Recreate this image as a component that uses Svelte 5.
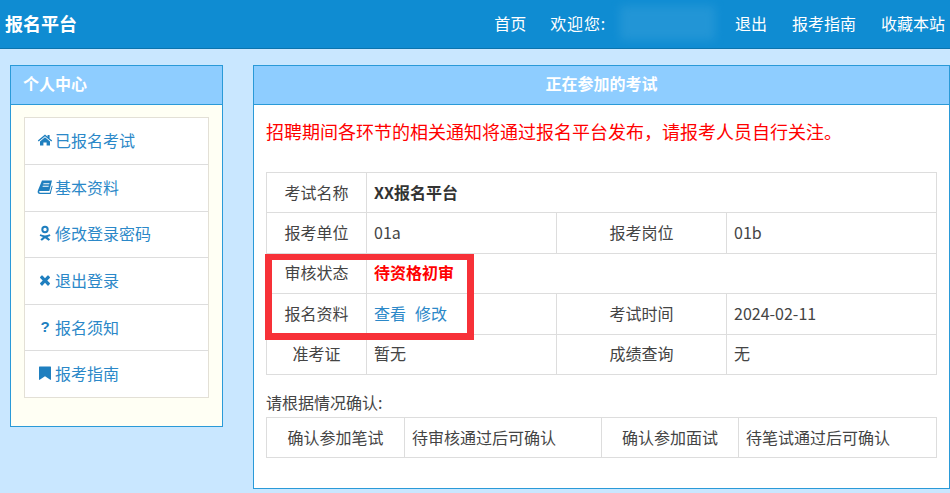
<script>
	const navLinks = ['退出', '报考指南', '收藏本站'];
	const menu = [
		{ name: 'home', label: '已报名考试' },
		{ name: 'book', label: '基本资料' },
		{ name: 'ok', label: '修改登录密码' },
		{ name: 'times', label: '退出登录' },
		{ name: 'question', label: '报名须知' },
		{ name: 'bookmark', label: '报考指南' }
	];
</script>

<header class="topbar">
	<div class="brand">报名平台</div>
	<nav class="nav">
		<a class="first" href="#home">首页</a>
		<span class="welcome">欢迎您:</span>
		<span class="smudge"></span>
		{#each navLinks as link}
			<a href="#link">{link}</a>
		{/each}
	</nav>
</header>

<div class="page">
	<aside class="side">
		<h2 class="side-title">个人中心</h2>
		<div class="side-body">
			<ul class="menu">
				{#each menu as item}
					<li>
						<a href="#menu">
							<span class="icon">
								{#if item.name === 'home'}
									<svg viewBox="0 0 16 16" width="16" height="16"><path d="M8 2.4 .8 8.6l.9 1L8 4.2l6.3 5.4.9-1-2.6-2.2V3h-2v1.7zM3 9.6 8 5.3l5 4.3v4H9.6v-3H6.4v3H3z" /></svg>
								{:else if item.name === 'book'}
									<svg viewBox="0 0 16 16" width="16" height="16"><path d="M5 1.5h10L12.300 12H3.200c-.8 0-1 .5-1 .8 0 .5.4.9 1 .9h9.600l2-7.200.8.600L13.600 15H3c-1.600 0-2.700-1.200-2.300-3zm1.500 2.800-.3 1h6l.3-1zm-.700 2.400-.3 1h6l.3-1z" /></svg>
								{:else if item.name === 'ok'}
									<svg viewBox="0 0 16 16" width="16" height="16"><path fill-rule="evenodd" d="M8 .8a3.700 3.700 0 1 1 0 7.400A3.700 3.700 0 0 1 8 .8m0 2a1.700 1.700 0 1 0 0 3.400 1.700 1.700 0 0 0 0-3.400" /><path d="M3.300 9.300c2.800 1.500 6.600 1.500 9.400 0l.8 1.500c-1 .7-2 1-3 1.200l2.600 2.500-1.500 1.300L8 13.200l-3.100 2.600-1.500-1.300L6 12c-1-.2-2.100-.5-3.300-1.200z" /></svg>
								{:else if item.name === 'times'}
									<svg viewBox="0 0 16 16" width="16" height="16"><path d="M4.500 3.600 3.200 4.900c-.3.300-.3.700 0 1L5.700 8.500l-2.500 2.600c-.3.300-.3.700 0 1l1.300 1.300c.3.300.7.300 1 0L8 10.800l2.500 2.600c.3.300.7.300 1 0l1.300-1.300c.3-.3.300-.7 0-1l-2.500-2.600 2.500-2.600c.3-.3.300-.7 0-1l-1.300-1.300c-.3-.3-.7-.3-1 0L8 6.200 5.500 3.600c-.3-.3-.7-.3-1 0" /></svg>
								{:else if item.name === 'question'}
									<span class="qmark">?</span>
								{:else}
									<svg viewBox="0 0 16 16" width="16" height="16"><path d="M2.500 1.500h11c.3 0 .5.2.5.500v12.500c0 .4-.4.6-.7.300L8 11.200l-5.300 3.600c-.3.200-.7 0-.7-.3V2c0-.3.200-.5.500-.5" /></svg>
								{/if}
							</span>{item.label}
						</a>
					</li>
				{/each}
			</ul>
		</div>
	</aside>

	<main class="main">
		<h2 class="main-title">正在参加的考试</h2>
		<div class="main-body">
			<p class="notice">招聘期间各环节的相关通知将通过报名平台发布，请报考人员自行关注。</p>

			<div class="table-wrap">
				<table class="info">
					<colgroup>
						<col class="c1" /><col class="c2" /><col class="c3" /><col />
					</colgroup>
					<tbody>
						<tr>
							<th>考试名称</th>
							<td colspan="3"><strong class="exam">XX报名平台</strong></td>
						</tr>
						<tr>
							<th>报考单位</th>
							<td>01a</td>
							<th>报考岗位</th>
							<td>01b</td>
						</tr>
						<tr>
							<th>审核状态</th>
							<td colspan="3"><strong class="status">待资格初审</strong></td>
						</tr>
						<tr>
							<th>报名资料</th>
							<td><a href="#view">查看</a><a class="edit" href="#edit">修改</a></td>
							<th>考试时间</th>
							<td>2024-02-11</td>
						</tr>
						<tr>
							<th>准考证</th>
							<td>暂无</td>
							<th>成绩查询</th>
							<td>无</td>
						</tr>
					</tbody>
				</table>
				<div class="highlight"></div>
			</div>

			<p class="confirm">请根据情况确认:</p>
			<table class="info second">
				<colgroup>
					<col class="d1" /><col class="d2" /><col class="d3" /><col />
				</colgroup>
				<tbody>
					<tr>
						<th>确认参加笔试</th>
						<td>待审核通过后可确认</td>
						<th>确认参加面试</th>
						<td>待笔试通过后可确认</td>
					</tr>
				</tbody>
			</table>
		</div>
	</main>
</div>

<style>
	:global(body) {
		background: #c9e7ff;
		font-family: "Noto Sans CJK SC", "Noto Sans", sans-serif;
		font-size: 16px;
		color: #333;
		overflow: hidden;
	}

	.topbar {
		display: flex;
		justify-content: space-between;
		align-items: center;
		height: 49px;
		box-sizing: border-box;
		padding-bottom: 3px;
		background: #0f8cd2;
		border-bottom: 1px solid #0b74ae;
		color: #fff;
	}

	.brand {
		padding-left: 5px;
		font-size: 18px;
		font-weight: 700;
	}

	.nav {
		display: flex;
		align-items: center;
		gap: 25px;
		padding-right: 5px;
	}

	.nav a {
		color: #fff;
		text-decoration: none;
	}

	.nav .first {
		margin-right: -1px;
	}

	.welcome {
		margin-right: -11px;
		letter-spacing: 0.8px;
	}

	.smudge {
		width: 95px;
		height: 34px;
		background: #2b9ad8;
		filter: blur(5px);
		opacity: 0.7;
		margin-right: -5px;
	}

	.page {
		display: flex;
		align-items: flex-start;
		gap: 30px;
		padding: 16px 0 0 10px;
	}

	.side {
		width: 213px;
		box-sizing: border-box;
		border: 1px solid #2a9ad8;
		background: #fffff4;
	}

	.side-title,
	.main-title {
		margin: 0;
		height: 39px;
		line-height: 35px;
		box-sizing: border-box;
		background: #8ecdff;
		border-bottom: 1px solid #2a9ad8;
		color: #fff;
		font-size: 16px;
		font-weight: 700;
	}

	.side-title {
		padding-left: 12px;
	}

	.side-body {
		padding: 12px 13px 28px;
	}

	.menu {
		list-style: none;
		margin: 0;
		padding: 0;
		background: #fff;
		border: 1px solid #e3e0d6;
	}

	.menu li {
		height: 46.600px;
		box-sizing: border-box;
		border-top: 1px solid #ddd;
	}

	.menu li:first-child {
		height: 46px;
		border-top: 0;
	}

	.menu a {
		display: flex;
		align-items: center;
		height: 100%;
		box-sizing: border-box;
		padding: 0 0 2px 12px;
		color: #2b88c8;
		text-decoration: none;
	}

	.icon {
		display: flex;
		justify-content: center;
		width: 16px;
		margin-right: 2px;
		color: #1f7fbf;
	}

	.icon svg {
		fill: currentColor;
	}

	.qmark {
		font-family: "Liberation Sans", sans-serif;
		font-size: 15px;
		font-weight: 700;
		line-height: 16px;
	}

	.main {
		width: 697px;
		height: 424px;
		box-sizing: border-box;
		border: 1px solid #2a9ad8;
		background: #fff;
	}

	.main-title {
		text-align: center;
	}

	.main-body {
		padding: 0 12px;
	}

	.notice {
		margin: 0;
		padding-top: 13px;
		height: 67px;
		box-sizing: border-box;
		color: #f00;
		font-size: 18px;
		line-height: 26px;
	}

	.table-wrap {
		position: relative;
	}

	.info {
		width: 671px;
		table-layout: fixed;
		border-collapse: collapse;
		line-height: 24px;
	}

	.info th,
	.info td {
		height: 40.400px;
		box-sizing: border-box;
		border: 1px solid #ddd;
		padding: 0 7px 2px;
		font-size: 16px;
		font-weight: 400;
		color: #444;
	}

	.info th {
		text-align: center;
	}

	.info td {
		text-align: left;
	}

	.c1 {
		width: 100px;
	}

	.c2 {
		width: 190px;
	}

	.c3 {
		width: 170px;
	}

	.d1 {
		width: 138px;
	}

	.d2 {
		width: 197px;
	}

	.d3 {
		width: 137px;
	}

	.info a {
		color: #2b88c8;
		text-decoration: none;
	}

	.edit {
		margin-left: 9px;
	}

	.exam {
		color: #333;
		font-weight: 700;
	}

	.status {
		color: #f00;
		font-weight: 700;
	}

	.highlight {
		position: absolute;
		left: -1px;
		top: 82px;
		width: 209px;
		height: 86px;
		box-sizing: border-box;
		border: 7px solid #f73138;
		border-top-width: 6px;
	}

	.confirm {
		margin: 0;
		height: 42px;
		padding-top: 15px;
		box-sizing: border-box;
		font-size: 16px;
		line-height: 25px;
		color: #444;
	}
</style>
